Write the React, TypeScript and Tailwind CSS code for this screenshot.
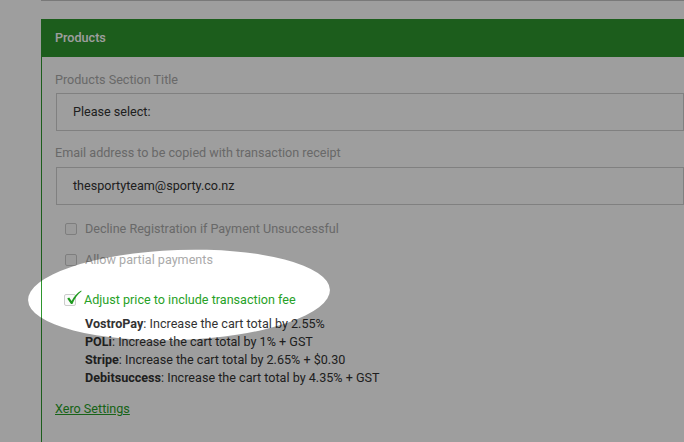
import React from "react";

function Box({ checked = false }: { checked?: boolean }) {
  return (
    <span className="relative inline-block w-[12px] h-[12px] shrink-0 border border-[#cccccc] rounded-[2px] bg-[#fafafa]">
      {checked && (
        <svg
          className="absolute left-[1px] top-[-5px]"
          width="16"
          height="15"
          viewBox="0 0 16 15"
        >
          <path
            d="M1.2 8.6 L3.2 7.4 L5.6 11 C8 6.6 11 3 15.2 0.6 L15.6 1.2 C11.6 4.4 8.6 8.6 6.4 14 L5 14 Z"
            fill="#1f9a1f"
          />
        </svg>
      )}
    </span>
  );
}

export default function App() {
  const fees: [string, string][] = [
    ["VostroPay", ": Increase the cart total by 2.55%"],
    ["POLi", ": Increase the cart total by 1% + GST"],
    ["Stripe", ": Increase the cart total by 2.65% + $0.30"],
    ["Debitsuccess", ": Increase the cart total by 4.35% + GST"],
  ];
  return (
    <div
      className="relative w-[684px] h-[442px] overflow-hidden bg-white text-[12.6px]"
      style={{ fontFamily: "Roboto, 'Liberation Sans', sans-serif" }}
    >
      <div className="ml-[41px] h-px bg-[#c4c4c4]" />
      <div className="ml-[41px] mt-[18px] border-l border-[#2e962e] h-[500px]">
        <div className="h-[38px] bg-[#2e962e] text-white flex items-center pl-[13px] font-medium">
          Products
        </div>
        <div className="pl-[13px]">
          <div className="pt-[15px] leading-[16px] text-[#aaaaaa]">Products Section Title</div>
          <div className="ml-px mt-[5px] h-[38px] border border-[#cfcfcf] flex items-center pl-[16px] text-[#333333]">
            Please select:
          </div>
          <div className="mt-[14px] leading-[16px] text-[#aaaaaa]">
            Email address to be copied with transaction receipt
          </div>
          <div className="ml-px mt-[6px] h-[38px] border border-[#cfcfcf] flex items-center pl-[16px] text-[#333333]">
            thesportyteam@sporty.co.nz
          </div>
          <div className="ml-[10px] mt-[16px] h-[16px] flex items-center gap-[8px] text-[#aaaaaa]">
            <Box />
            <span>Decline Registration if Payment Unsuccessful</span>
          </div>
          <div className="ml-[10px] mt-[15px] h-[16px] flex items-center gap-[8px] text-[#aaaaaa]">
            <Box />
            <span>Allow partial payments</span>
          </div>
          <div className="ml-[9px] mt-[24px] h-[16px] flex items-center gap-[8px] text-[#27a127]">
            <Box checked />
            <span>Adjust price to include transaction fee</span>
          </div>
          <div className="ml-[30px] mt-[7px] leading-[18px] text-[#333333]">
            {fees.map(([n, t]) => (
              <div key={n}>
                <span className="font-bold">{n}</span>
                {t}
              </div>
            ))}
          </div>
          <div className="mt-[14px] leading-[16px]">
            <a className="text-[#27a127] underline">Xero Settings</a>
          </div>
        </div>
      </div>
      <div className="pointer-events-none absolute left-[28px] top-[250px] w-[302px] h-[90px] rounded-[50%] -rotate-2 shadow-[0_0_0_2000px_rgba(0,0,0,0.38)]" />
    </div>
  );
}
